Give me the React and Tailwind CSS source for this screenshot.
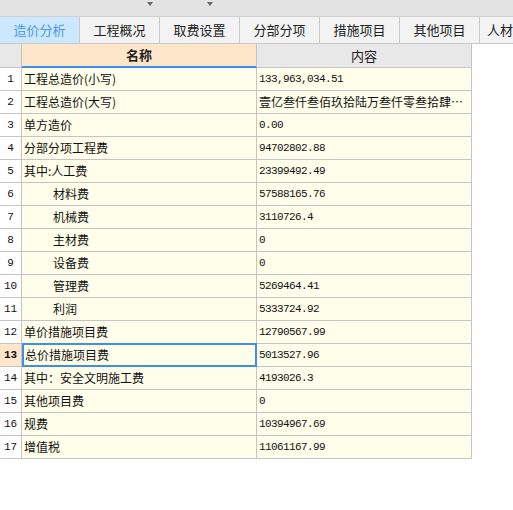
import React from 'react';

const tabs = ['造价分析', '工程概况', '取费设置', '分部分项', '措施项目', '其他项目', '人材机汇总'];

const rows = [
  { name: '工程总造价(小写)', value: '133,963,034.51' },
  { name: '工程总造价(大写)', value: '壹亿叁仟叁佰玖拾陆万叁仟零叁拾肆…', cjk: true },
  { name: '单方造价', value: '0.00' },
  { name: '分部分项工程费', value: '94702802.88' },
  { name: '其中:人工费', value: '23399492.49' },
  { name: '材料费', value: '57588165.76', indent: true },
  { name: '机械费', value: '3110726.4', indent: true },
  { name: '主材费', value: '0', indent: true },
  { name: '设备费', value: '0', indent: true },
  { name: '管理费', value: '5269464.41', indent: true },
  { name: '利润', value: '5333724.92', indent: true },
  { name: '单价措施项目费', value: '12790567.99' },
  { name: '总价措施项目费', value: '5013527.96', selected: true },
  { name: '其中：安全文明施工费', value: '4193026.3' },
  { name: '其他项目费', value: '0' },
  { name: '规费', value: '10394967.69' },
  { name: '增值税', value: '11061167.99' },
];

const cjk = "font-['Noto_Sans_CJK_SC',sans-serif]";
const mono = "font-['Liberation_Mono','Noto_Sans_CJK_SC',monospace]";

function Caret() {
  return <div className="w-0 h-0 border-l-[3px] border-r-[3px] border-t-[4px] border-l-transparent border-r-transparent border-t-[#666]" />;
}

export default function App() {
  return (
    <div className={`w-[513px] h-[510px] bg-white overflow-hidden ${cjk}`}>
      {/* top strip */}
      <div className="h-[17px] bg-[#e3e3e3] border-b border-[#d0d0d0] relative">
        <div className="absolute left-[147px] top-[2px]"><Caret /></div>
        <div className="absolute left-[207px] top-[2px]"><Caret /></div>
      </div>

      {/* tabs */}
      <div className="flex h-[27px] bg-[#f3f3f3] border-b border-[#c8c8c8] whitespace-nowrap overflow-hidden">
        {tabs.map((t, i) => (
          <div
            key={t}
            className={`w-[80px] shrink-0 flex items-center justify-center text-[13px] border-r border-[#c8c8c8] ${
              i === 0 ? 'bg-[#cce8ff] text-[#4a97e6]' : 'text-[#222]'
            }`}
          >
            {t}
          </div>
        ))}
      </div>

      {/* table */}
      <div className="w-[472px]">
        <div className="flex h-[24px]">
          <div className="w-[22px] bg-[#e8e8e8] border-r border-b border-[#c4c4c4]" />
          <div className="w-[235px] bg-[#fde6c9] border-r border-r-[#c4c4c4] border-b-2 border-b-[#3d8fe8] flex items-center justify-center text-[13px] font-bold text-[#222]">
            名称
          </div>
          <div className="w-[215px] bg-[#e8e8e8] border-r border-b border-[#c4c4c4] flex items-center justify-center text-[13px] text-[#222]">
            内容
          </div>
        </div>
        {rows.map((r, i) => (
          <div key={i} className="flex h-[23px] text-[#111]">
            <div
              className={`w-[22px] border-r border-b border-[#c4c4c4] flex items-center justify-center text-[11px] ${mono} ${
                r.selected ? 'bg-[#fde6c9] font-bold' : 'bg-white'
              }`}
            >
              {i + 1}
            </div>
            {r.selected ? (
              <div className="w-[235px] h-[24px] -mt-px bg-[#fffeea] border-2 border-[#3d8fe8] flex items-center text-[12px] pl-[1px]">
                {r.name}
              </div>
            ) : (
              <div
                className={`w-[235px] bg-[#fffeea] border-r border-b border-[#c4c4c4] flex items-center text-[12px] ${
                  r.indent ? 'pl-[31px]' : 'pl-[2px]'
                }`}
              >
                {r.name}
              </div>
            )}
            <div
              className={`w-[215px] bg-[#fffeea] border-r border-b border-[#c4c4c4] flex items-center pl-[2px] overflow-hidden whitespace-nowrap ${
                r.cjk ? 'text-[12px]' : `text-[11px] tracking-[-0.6px] ${mono}`
              }`}
            >
              {r.value}
            </div>
          </div>
        ))}
      </div>
    </div>
  );
}
